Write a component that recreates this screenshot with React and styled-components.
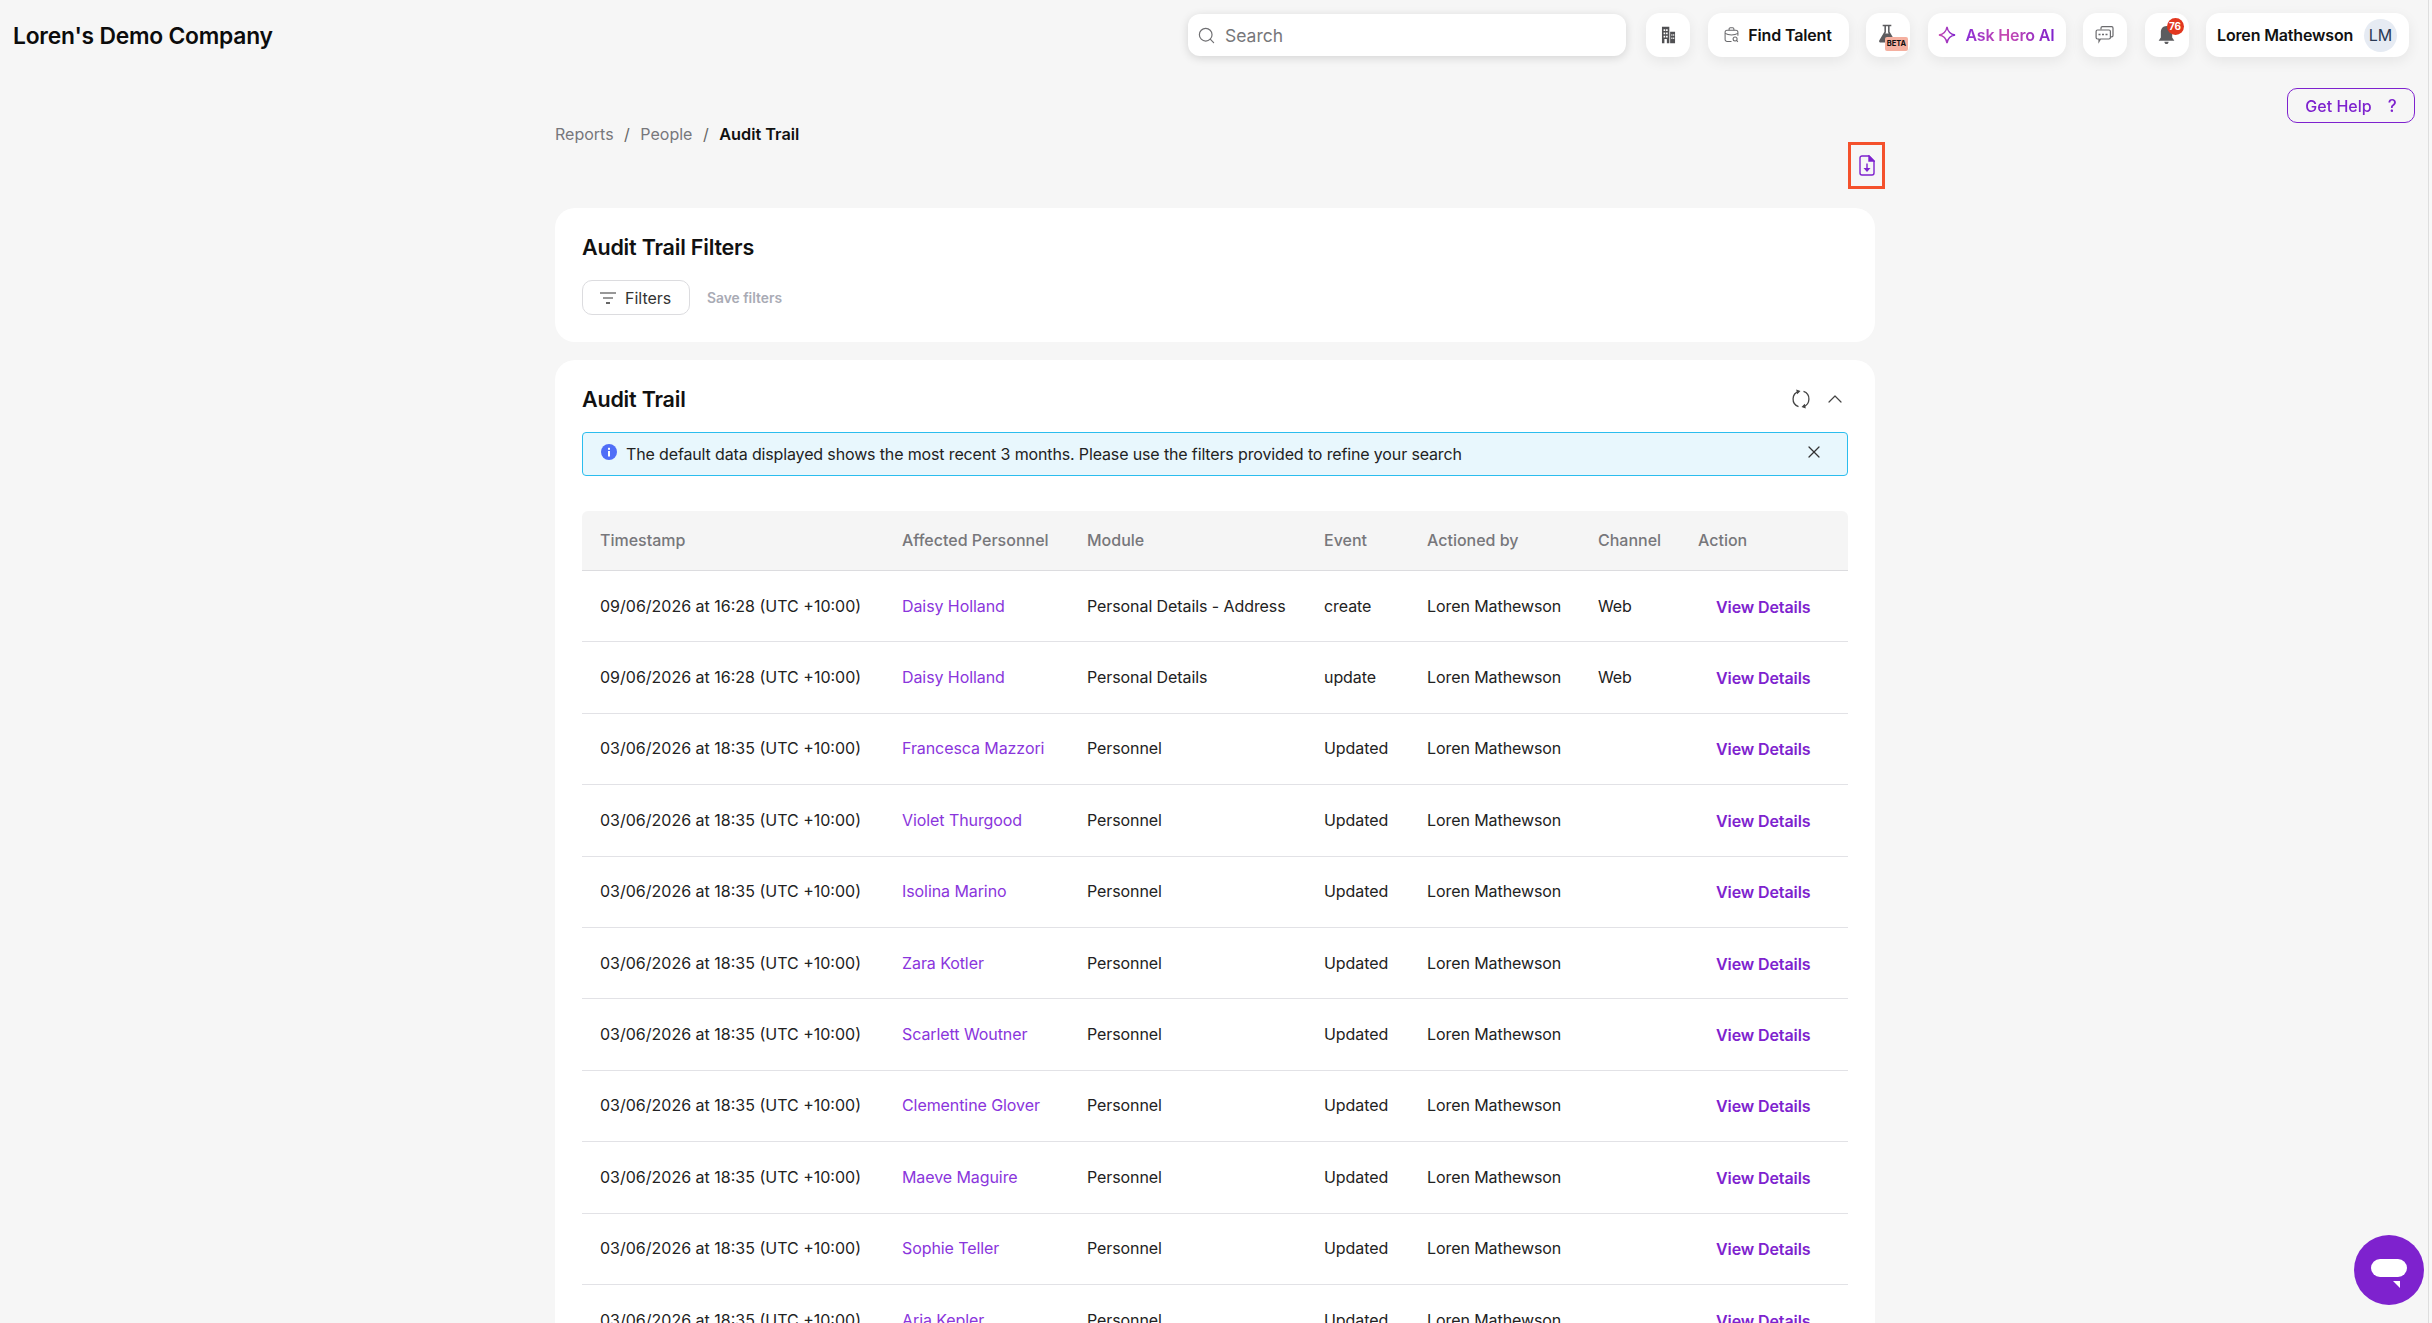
import React from "react";
import styled, { createGlobalStyle } from "styled-components";
import { ChevronUp, X, Search as SearchGlyph } from "lucide-react";

const ROWS = [
  ["09/06/2026 at 16:28 (UTC +10:00)", "Daisy Holland", "Personal Details - Address", "create", "Web"],
  ["09/06/2026 at 16:28 (UTC +10:00)", "Daisy Holland", "Personal Details", "update", "Web"],
  ["03/06/2026 at 18:35 (UTC +10:00)", "Francesca Mazzori", "Personnel", "Updated", ""],
  ["03/06/2026 at 18:35 (UTC +10:00)", "Violet Thurgood", "Personnel", "Updated", ""],
  ["03/06/2026 at 18:35 (UTC +10:00)", "Isolina Marino", "Personnel", "Updated", ""],
  ["03/06/2026 at 18:35 (UTC +10:00)", "Zara Kotler", "Personnel", "Updated", ""],
  ["03/06/2026 at 18:35 (UTC +10:00)", "Scarlett Woutner", "Personnel", "Updated", ""],
  ["03/06/2026 at 18:35 (UTC +10:00)", "Clementine Glover", "Personnel", "Updated", ""],
  ["03/06/2026 at 18:35 (UTC +10:00)", "Maeve Maguire", "Personnel", "Updated", ""],
  ["03/06/2026 at 18:35 (UTC +10:00)", "Sophie Teller", "Personnel", "Updated", ""],
  ["03/06/2026 at 18:35 (UTC +10:00)", "Aria Kepler", "Personnel", "Updated", ""],
];

const BuildingIcon = () => (
  <svg width="15" height="18" viewBox="0 0 18 22" fill="#505053">
    <path fillRule="evenodd" d="M1 1h9v20H1zM3 4v2h2V4zm3 0v2h2V4zM3 8v2h2V8zm3 0v2h2V8zm-3 4v2h2v-2zm3 0v2h2v-2zm-2 4v5h3v-5z" />
    <path fillRule="evenodd" d="M11 7h6v14h-6zm1.500 3v2h1.300v-2zm2.200 0v2H16v-2zm-2.200 4v2h1.300v-2zm2.200 0v2H16v-2z" />
  </svg>
);

const TalentIcon = () => (
  <svg width="15" height="16" viewBox="0 0 18 20" fill="none" stroke="#6a6a6d" strokeWidth="1.300">
    <path d="M6 4V2.500C6 1.700 6.700 1 7.500 1h3c.8 0 1.500.7 1.500 1.500V4" />
    <path d="M9 18H3.500C2.100 18 1 16.900 1 15.500V6.500C1 5.100 2.100 4 3.500 4h11C15.900 4 17 5.100 17 6.500V11" />
    <path d="M1 8c4.500 2.500 11.500 2.500 16 0" />
    <circle cx="13.500" cy="15" r="2.500" />
    <path d="M15.300 16.800 17 18.500" />
  </svg>
);

const FlaskIcon = () => (
  <svg width="18" height="19" viewBox="0 0 20 22" fill="#5c5c5f">
    <path d="M5 1h10v1.500h-2v6.500l6 10c.6 1.300-.2 2.500-2 2.500H3c-1.800 0-2.600-1.200-2-2.500l6-10V2.500H5z" />
    <path fill="#fff" d="M8.800 2.500h2.400v7l.8 1.500H8l.8-1.500z" />
  </svg>
);

const SparkIcon = () => (
  <svg width="18" height="18" viewBox="0 0 19 19" fill="none" strokeWidth="1.500">
    <defs>
      <linearGradient id="spark" x1="0" x2="1" y1="0" y2="0">
        <stop offset="0" stopColor="#c94cb0" />
        <stop offset="1" stopColor="#7e22ce" />
      </linearGradient>
    </defs>
    <path stroke="url(#spark)" d="M9.500 1c.8 5 3.300 7.700 8.500 8.500-5.200.8-7.700 3.500-8.500 8.500C8.700 13 6.200 10.300 1 9.500 6.200 8.700 8.700 6 9.500 1z" />
  </svg>
);

const ChatIcon = () => (
  <svg width="20" height="20" viewBox="0 0 20 20" fill="#fff" stroke="#6a6a6d" strokeWidth="1.200">
    <path d="M6 4.500V3c0-.8.600-1.400 1.400-1.400h9.200c.8 0 1.400.6 1.400 1.400v7.500c0 .8-.6 1.400-1.400 1.400H16" />
    <path d="M2.500 5h11.500c.8 0 1.400.6 1.400 1.400v6.200c0 .8-.6 1.400-1.400 1.400H5.500l-1.500 2.500V14H2.500c-.8 0-1.400-.6-1.400-1.400V6.400C1.100 5.600 1.700 5 2.500 5z" />
    <path strokeDasharray="2 1.500" strokeWidth="1.500" d="M3.500 9.500h9.500" />
  </svg>
);

const BellIcon = () => (
  <svg width="17" height="21" viewBox="0 0 18 22" fill="#5c5c5f">
    <path d="M9 1c3.800 0 6 3 6 6.500v5.500l2.300 3.500H.7L3 13V7.500C3 4 5.200 1 9 1z" />
    <path d="M6.800 17.500h4.400c0 1.500-1 2.500-2.200 2.500s-2.200-1-2.200-2.500z" />
  </svg>
);

const ExportIcon = () => (
  <svg width="16" height="21" viewBox="0 0 16 21" fill="none" stroke="#7e22ce" strokeWidth="1.400">
    <path d="M10 1H3C1.900 1 1 1.900 1 3v15c0 1.100.9 2 2 2h10c1.100 0 2-.9 2-2V6z" />
    <path fill="#7e22ce" d="M10 1v5h5z" />
    <path d="M8 8.500v6.500" />
    <path fill="#7e22ce" stroke="none" d="M4.500 13h7L8 17z" />
  </svg>
);

const FilterIcon = () => (
  <svg width="16" height="12" viewBox="0 0 16 12" fill="none" stroke="#333" strokeWidth="1.200">
    <path d="M0 1h16M3 6h10" />
    <path strokeWidth="1.500" d="M6 11h4" />
  </svg>
);

const RefreshIcon = () => (
  <svg width="18" height="20" viewBox="0 0 18 20" fill="none" stroke="#444" strokeWidth="1.300">
    <path d="M7 2.300A8 8 0 0 0 6.500 17.600" />
    <path d="M11 17.700A8 8 0 0 0 11.500 2.400" />
    <path fill="#444" stroke="none" d="M4.200 0.400 8.500 2 5.200 5.200zM13.800 19.600 9.500 18l3.300-3.200z" />
  </svg>
);

const InfoIcon = () => (
  <svg width="16" height="16" viewBox="0 0 16 16">
    <circle cx="8" cy="8" r="8" fill="#4f6ef7" />
    <rect x="7" y="7" width="2" height="5.500" fill="#fff" />
    <rect x="7" y="3.800" width="2" height="2" fill="#fff" />
  </svg>
);

const App = () => (
  <Page>
    <GlobalStyle />
    <Header>
      <Company>Loren's Demo Company</Company>
      <Actions>
        <SearchBox>
          <SearchGlyph size={19} color="#6f6f72" strokeWidth={1.5} />
          <SearchText>Search</SearchText>
        </SearchBox>
        <IconButton>
          <BuildingIcon />
        </IconButton>
        <PillButton $width="141px">
          <TalentIcon />
          <PillLabel>Find Talent</PillLabel>
        </PillButton>
        <IconButton>
          <FlaskNudge>
            <FlaskIcon />
          </FlaskNudge>
          <BetaTag>BETA</BetaTag>
        </IconButton>
        <PillButton $width="138px">
          <SparkIcon />
          <HeroLabel>Ask Hero AI</HeroLabel>
        </PillButton>
        <IconButton>
          <ChatIcon />
        </IconButton>
        <IconButton>
          <BellIcon />
          <CountBadge>76</CountBadge>
        </IconButton>
        <ProfileButton>
          <PillLabel>Loren Mathewson</PillLabel>
          <Avatar>LM</Avatar>
        </ProfileButton>
      </Actions>
    </Header>

    <HelpButton>
      Get Help <HelpMark>?</HelpMark>
    </HelpButton>

    <Content>
      <Breadcrumb>
        <Crumb>Reports</Crumb>
        <Slash>/</Slash>
        <Crumb>People</Crumb>
        <Slash>/</Slash>
        <CurrentCrumb>Audit Trail</CurrentCrumb>
      </Breadcrumb>

      <ExportRow>
        <ExportBox>
          <ExportIcon />
        </ExportBox>
      </ExportRow>

      <FilterCard>
        <CardTitle>Audit Trail Filters</CardTitle>
        <FilterTools>
          <FilterButton>
            <FilterIcon />
            Filters
          </FilterButton>
          <SaveFilters>Save filters</SaveFilters>
        </FilterTools>
      </FilterCard>

      <TrailCard>
        <TrailHeader>
          <CardTitle>Audit Trail</CardTitle>
          <TrailTools>
            <RefreshIcon />
            <ChevronUp size={24} color="#444" strokeWidth={1.2} />
          </TrailTools>
        </TrailHeader>

        <Alert>
          <InfoIcon />
          <AlertText>The default data displayed shows the most recent 3 months. Please use the filters provided to refine your search</AlertText>
          <X size={20} color="#333" strokeWidth={1.5} />
        </Alert>

        <HeadRow>
          <span>Timestamp</span>
          <span>Affected Personnel</span>
          <span>Module</span>
          <span>Event</span>
          <span>Actioned by</span>
          <span>Channel</span>
          <span>Action</span>
        </HeadRow>
        {ROWS.map(([time, person, module, event, channel], i) => (
          <Row key={i}>
            <TimeCell>{time}</TimeCell>
            <PersonLink>{person}</PersonLink>
            <span>{module}</span>
            <span>{event}</span>
            <span>Loren Mathewson</span>
            <span>{channel}</span>
            <DetailsLink>View Details</DetailsLink>
          </Row>
        ))}
      </TrailCard>
    </Content>

    <ChatBubble>
      <ChatPill />
      <ChatTail />
    </ChatBubble>
    <PageEdge />
  </Page>
);
export default App;

const GlobalStyle = createGlobalStyle`
  html, body {
    margin: 0;
    height: 100%;
    overflow: hidden;
    background: #f6f6f6;
  }
  * {
    box-sizing: border-box;
  }
`;

const Page = styled.div`
  height: 1323px;
  overflow: hidden;
  background: #f6f6f6;
  color: #111;
  font-family: Inter, "Liberation Sans", sans-serif;
  font-size: 16px;
`;

const Header = styled.header`
  display: flex;
  align-items: center;
  justify-content: space-between;
  height: 70px;
  padding: 0 23px 0 13px;
`;

const Company = styled.div`
  font-size: 22.8px;
  font-weight: 600;
  letter-spacing: -0.2px;
  color: #0c0c0c;
`;

const Actions = styled.div`
  display: flex;
  align-items: center;
  gap: 17.5px;
`;

const SearchBox = styled.div`
  display: flex;
  align-items: center;
  gap: 9px;
  width: 438px;
  height: 42px;
  margin-right: 2.5px;
  padding-left: 9px;
  background: #fff;
  border-radius: 12px;
  box-shadow: 0 2px 10px rgba(0, 0, 0, 0.14);
`;

const SearchText = styled.span`
  font-size: 17.5px;
  color: #77777a;
`;

const IconButton = styled.div`
  position: relative;
  display: flex;
  align-items: center;
  justify-content: center;
  width: 44px;
  height: 44px;
  background: #fff;
  border-radius: 14px;
  box-shadow: 0 4px 14px rgba(0, 0, 0, 0.07);
`;

const PillButton = styled(IconButton)`
  width: ${(p) => p.$width};
  gap: 9px;
`;

const PillLabel = styled.span`
  font-size: 16px;
  font-weight: 600;
  letter-spacing: -0.15px;
  white-space: nowrap;
`;

const HeroLabel = styled(PillLabel)`
  background: linear-gradient(90deg, #8a2bd6, #c94cb0 45%, #7e22ce);
  -webkit-background-clip: text;
  background-clip: text;
  color: transparent;
`;

const FlaskNudge = styled.div`
  display: flex;
  margin: -3px 3px 0 0;
`;

const BetaTag = styled.span`
  position: absolute;
  right: 2px;
  bottom: 6px;
  width: 23px;
  height: 14px;
  background: #f5b0a0;
  border-radius: 2px;
  font-size: 7.5px;
  font-weight: 700;
  line-height: 14px;
  text-align: center;
`;

const CountBadge = styled.span`
  position: absolute;
  top: 5px;
  right: 5px;
  width: 17px;
  height: 17px;
  border-radius: 50%;
  background: #e2371f;
  color: #fff;
  font-size: 10px;
  font-weight: 700;
  line-height: 17px;
  text-align: center;
`;

const ProfileButton = styled(IconButton)`
  justify-content: space-between;
  width: 203px;
  padding: 0 12px 0 11px;
`;

const Avatar = styled.div`
  display: flex;
  align-items: center;
  justify-content: center;
  width: 33px;
  height: 33px;
  border-radius: 50%;
  background: #e6ebf3;
  color: #2b3a55;
  font-size: 16px;
`;

const HelpButton = styled.div`
  position: fixed;
  top: 88px;
  right: 17px;
  display: flex;
  align-items: center;
  justify-content: center;
  gap: 16px;
  width: 128px;
  height: 35px;
  border: 1.5px solid #7e22ce;
  border-radius: 10px;
  color: #7e22ce;
  font-size: 16px;
  font-weight: 500;
`;

const HelpMark = styled.span`
  font-size: 17px;
`;

const Content = styled.main`
  width: 1320px;
  margin-left: 555px;
`;

const Breadcrumb = styled.nav`
  display: flex;
  align-items: center;
  height: 24px;
  margin-top: 52px;
  font-size: 16px;
`;

const Crumb = styled.span`
  color: #77777b;
`;

const Slash = styled.span`
  margin: 0 10.5px;
  color: #666;
`;

const CurrentCrumb = styled.span`
  font-size: 16.3px;
  font-weight: 600;
`;

const ExportRow = styled.div`
  display: flex;
  justify-content: flex-end;
  margin: -4px -10px 19px 0;
`;

const ExportBox = styled.div`
  display: flex;
  align-items: center;
  justify-content: center;
  width: 37px;
  height: 47px;
  border: 3px solid #f4512c;
`;

const Card = styled.section`
  background: #fff;
  border-radius: 20px;
  padding: 0 27px;
`;

const FilterCard = styled(Card)`
  height: 134px;
  padding-top: 26px;
`;

const CardTitle = styled.h2`
  margin: 0;
  font-size: 21.5px;
  font-weight: 600;
  line-height: 26px;
  letter-spacing: -0.2px;
`;

const FilterTools = styled.div`
  display: flex;
  align-items: center;
  gap: 17px;
  margin-top: 20px;
`;

const FilterButton = styled.div`
  display: flex;
  align-items: center;
  gap: 9px;
  width: 108px;
  height: 35px;
  padding-left: 17px;
  border: 1px solid #dcdcdf;
  border-radius: 10px;
  color: #333;
  font-size: 16px;
`;

const SaveFilters = styled.span`
  color: #a9abb5;
  font-size: 13.8px;
  font-weight: 600;
`;

const TrailCard = styled(Card)`
  margin-top: 18px;
  padding-top: 26px;
`;

const TrailHeader = styled.div`
  display: flex;
  align-items: center;
  justify-content: space-between;
`;

const TrailTools = styled.div`
  display: flex;
  align-items: center;
  gap: 13px;
  margin-right: 1px;
`;

const Alert = styled.div`
  display: flex;
  align-items: center;
  height: 44px;
  margin: 20px 0 35px;
  padding: 0 23px 4px 18px;
  background: #e8f7fd;
  border: 1.5px solid #2bbdee;
  border-radius: 4px;
`;

const AlertText = styled.span`
  flex: 1;
  margin: 3px 0 0 9px;
  color: #222;
  letter-spacing: -0.14px;
`;

const Columns = styled.div`
  display: grid;
  grid-template-columns: 302px 185px 237px 103px 171px 100px 133px;
  align-items: center;
  padding-left: 18px;
`;

const HeadRow = styled(Columns)`
  height: 60px;
  padding-bottom: 2px;
  background: #f5f5f5;
  border-bottom: 1.5px solid #dcdcdf;
  border-radius: 6px 6px 0 0;
  color: #77777b;
  font-weight: 500;
`;

const Row = styled(Columns)`
  height: 71.4px;
  padding-bottom: 1px;
  border-bottom: 1.5px solid #e2e2e6;
  color: #222;
  letter-spacing: -0.08px;
  white-space: nowrap;
`;

const TimeCell = styled.span`
  letter-spacing: 0;
`;

const PersonLink = styled.span`
  color: #8a35dc;
`;

const DetailsLink = styled.span`
  margin: 2px 0 0 18px;
  color: #7e22ce;
  font-weight: 600;
  letter-spacing: -0.1px;
`;

const ChatBubble = styled.div`
  position: fixed;
  right: 8px;
  bottom: 18px;
  width: 70px;
  height: 70px;
  border-radius: 50%;
  background: #7e22ce;
`;

const ChatPill = styled.div`
  position: absolute;
  left: 17px;
  top: 24px;
  width: 36px;
  height: 18px;
  border-radius: 9px;
  background: #fff;
`;

const ChatTail = styled.div`
  position: absolute;
  left: 39px;
  top: 46px;
  border-top: 7px solid #fff;
  border-left: 7px solid transparent;
`;

const PageEdge = styled.div`
  position: fixed;
  top: 0;
  right: 0;
  bottom: 0;
  width: 4px;
  background: #f8f8f8;
  border-left: 1px solid #dedede;
`;
